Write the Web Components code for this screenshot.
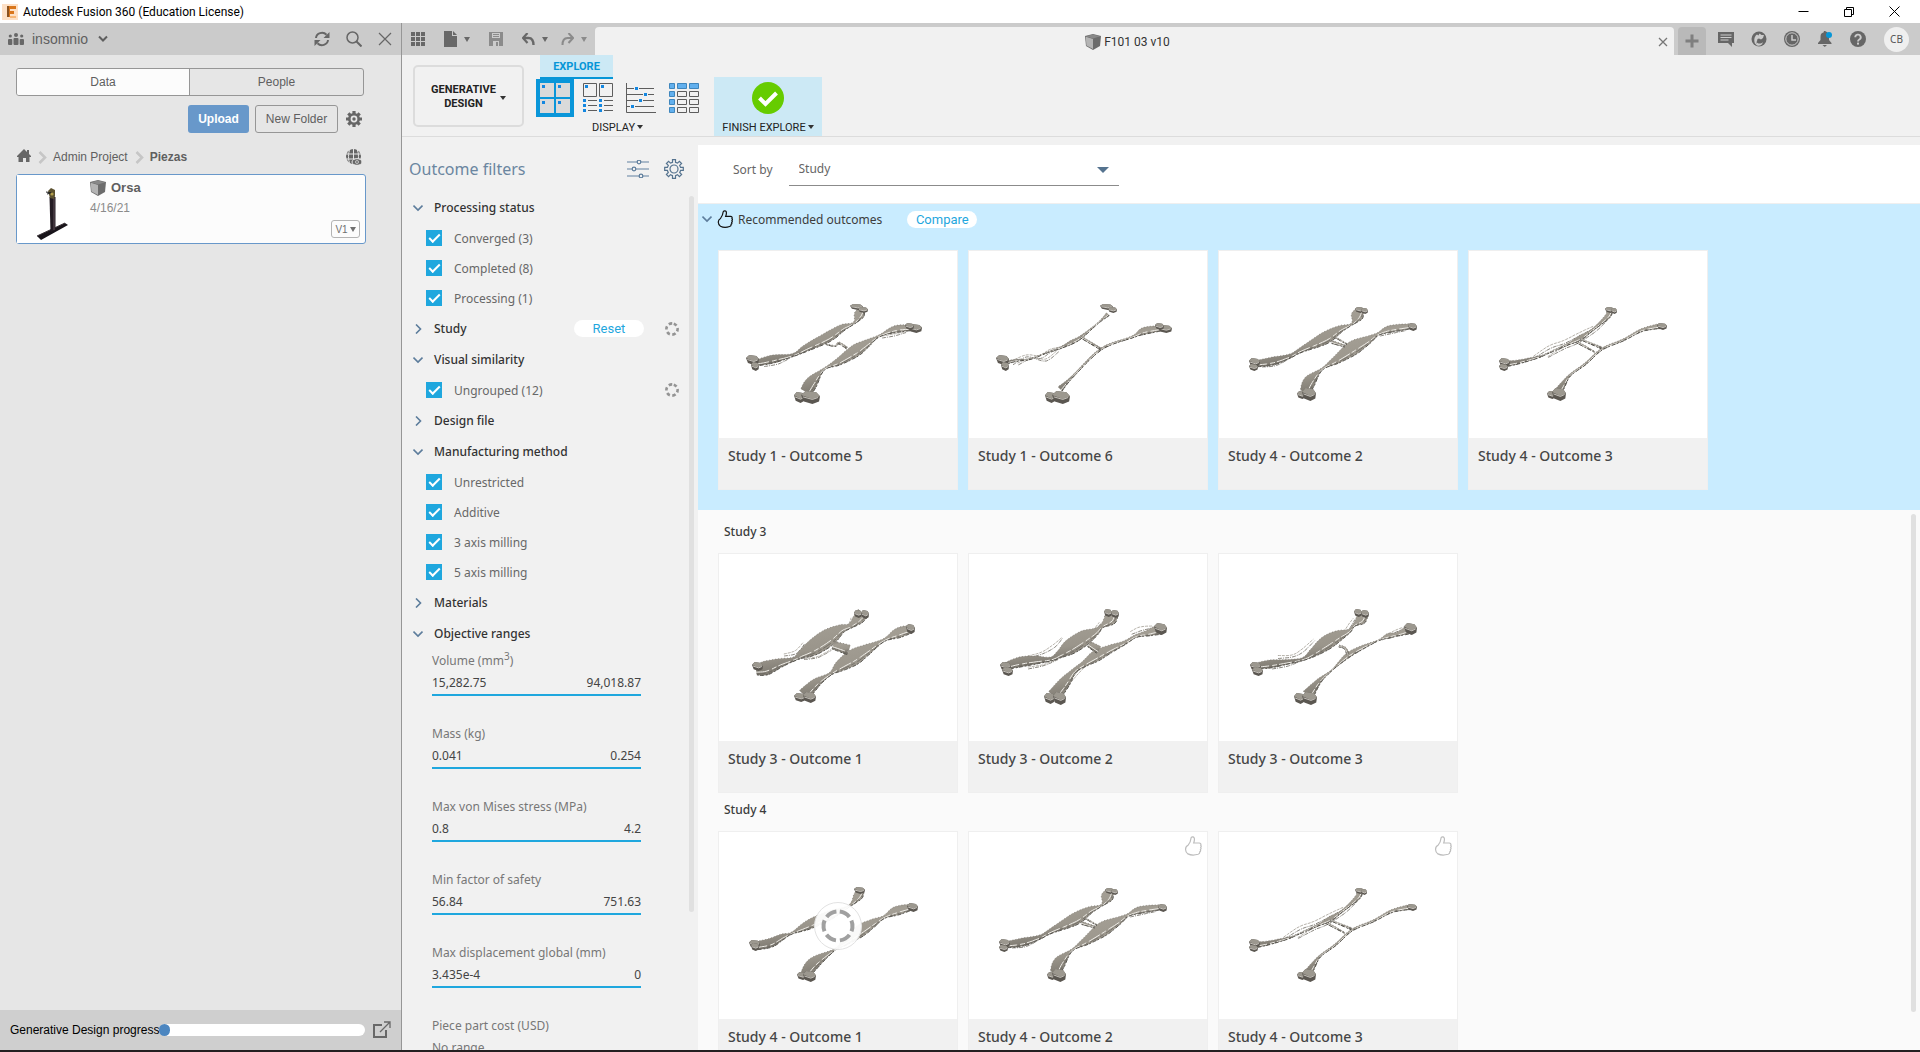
<!DOCTYPE html>
<html lang="en">
<head>
<meta charset="utf-8">
<title>Autodesk Fusion 360 (Education License)</title>
<style>
  html, body { margin: 0; height: 100%; }
  body {
    overflow: hidden;
    --ui: Roboto, "Open Sans", sans-serif;
    --element: "Noto Sans", "Open Sans", sans-serif;
    --arial: "Liberation Sans", Arial, sans-serif;
    --accent: #1fa7de;
    --slate: #55738f;
    font-family: var(--element);
    font-size: 12px;
    color: #3c3c3c;
  }
</style>
</head>
<body>
<fusion-app></fusion-app>

<script>
const ICONS = {
  logo: ['0 0 16 16', '<rect width="16" height="16" fill="#fde0c6"/><path d="M5 2h9v3H8v2h4v3H8v3H5z" fill="#d9761c"/><path d="M5 2h2v11H5z" fill="#8a5220"/><path d="M8 12h6v2H8z" fill="#f6b778"/>'],
  people: ['0 0 16 12', '<g fill="#686868"><circle cx="8" cy="2" r="2"/><circle cx="2.300" cy="3" r="1.600"/><circle cx="13.700" cy="3" r="1.600"/><rect x="5.500" y="5" width="5" height="7" rx="1"/><rect x="0" y="6" width="4.300" height="6" rx="1"/><rect x="11.700" y="6" width="4.300" height="6" rx="1"/></g>'],
  chevDown: ['0 0 10 8', '<path d="M1 1.500l4 4 4-4" fill="none" stroke="currentColor" stroke-width="2"/>'],
  thinDown: ['0 0 10 10', '<path d="M0.500 2.500l4.500 4.500 4.500-4.500" fill="none" stroke="#5d7d9c" stroke-width="1.600"/>'],
  thinRight: ['0 0 10 10', '<path d="M3 0.500l4.500 4.500-4.500 4.500" fill="none" stroke="#5d7d9c" stroke-width="1.600"/>'],
  refresh: ['0 0 16 16', '<g fill="none" stroke="#666" stroke-width="2"><path d="M2 7a6 5.600 0 0 1 10.500-3.200"/><path d="M14 9a6 5.600 0 0 1-10.500 3.200"/></g><path d="M15.500 1v6h-6zM.5 15V9h6z" fill="#666"/>'],
  search: ['0 0 16 16', '<circle cx="6.500" cy="6.500" r="5.500" fill="none" stroke="#666" stroke-width="1.500"/><path d="M10.500 10.500l5 5" stroke="#666" stroke-width="2"/>'],
  close: ['0 0 14 14', '<path d="M1 1l12 12M13 1L1 13" stroke="#666" stroke-width="1.200"/>'],
  tabClose: ['0 0 10 10', '<path d="M1 1l8 8M9 1L1 9" stroke="#777" stroke-width="1.300"/>'],
  gear: ['0 0 16 16', '<path d="M8 0v16M0 8h16M2.300 2.300l11.400 11.400M13.700 2.300L2.300 13.700" stroke="#666" stroke-width="3.200"/><circle cx="8" cy="8" r="6" fill="#666"/><circle cx="8" cy="8" r="3.400" fill="#e6e6e6"/><circle cx="8" cy="8" r="1.700" fill="#666"/>'],
  home: ['0 0 14 13', '<path d="M0 7l5-5 2-2 3 3V1h2v4l2 2v1h-1.500v5H9V9H6v4H1.500V8H0z" fill="#666"/>'],
  crumb: ['0 0 9 13', '<path d="M1.500 1L7 6.500 1.500 12" fill="none" stroke="#c6c6c6" stroke-width="2.600"/>'],
  globe: ['0 0 16 16', '<circle cx="7.500" cy="7.500" r="7.500" fill="#666"/><path d="M0 5h15M0 10h15M7.500 0v15M4 0c-2 4-2 11 0 15M11 0c2 4 2 11 0 15" fill="none" stroke="#e6e6e6"/><ellipse cx="11" cy="13" rx="5" ry="3.300" fill="#666" stroke="#e6e6e6"/><circle cx="11" cy="13" r="1.800" fill="#e6e6e6"/><circle cx="11" cy="13" r="1" fill="#666"/>'],
  cube: ['0 0 16 16', '<path d="M0 2l8-2 8 2-1 10-7 4-7-4z" fill="#6c6c6c"/><path d="M.8 2.800L8 5v10l-6.600-3.500z" fill="#b4b4b4"/><path d="M.8 2.300L8 .6l7.200 1.700L8 4.600z" fill="#888"/>'],
  stand: ['0 0 32 52', '<path d="M0 48l28-13 3 2-27 15z" fill="#18141a"/><path d="M0 48l28-13" stroke="#3b3338"/><path d="M12.500 9h6v33l-5 2z" fill="#241c24"/><path d="M17 10v32" stroke="#4a3d44" stroke-width="1.500"/><path d="M11 3l3-3 4 2v6l-1 3-4-1z" fill="#5c5230"/><path d="M9 4l6 1M10 6l4-1" stroke="#222"/><circle cx="15" cy="6" r="1.600" fill="#b3a04c"/>'],
  triDark: ['0 0 6 4', '<path d="M0 0h6L3 4z" fill="#333"/>'],
  tri: ['0 0 6 5', '<path d="M0 0h6L3 5z" fill="currentColor"/>'],
  grid: ['0 0 14 14', '<path d="M0 0h4v4H0zM5 0h4v4H5zM10 0h4v4h-4zM0 5h4v4H0zM5 5h4v4H5zM10 5h4v4h-4zM0 10h4v4H0zM5 10h4v4H5zM10 10h4v4h-4z" fill="#686868"/>'],
  file: ['0 0 13 16', '<path d="M0 0h8v5h5v11H0z" fill="#686868"/><path d="M9 0l4 4H9z" fill="#686868"/>'],
  save: ['0 0 14 14', '<path d="M0 0h14v14H0z" fill="#8b8b8b"/><path d="M3 1h8v5H3zM4 9h6v5H4z" fill="#ccc"/><path d="M4 2.500h6M4 4.500h6" stroke="#8b8b8b"/><path d="M7 10h2v4H7z" fill="#8b8b8b"/>'],
  undo: ['0 0 13 13', '<path d="M1 5h5.500c3.500 0 5 2.500 5 7" fill="none" stroke="#686868" stroke-width="2.400"/><path d="M5.500 0L1 5l4.500 5" fill="none" stroke="#686868" stroke-width="2.200"/>'],
  redo: ['0 0 13 13', '<path d="M12 5H6.500C3 5 1.500 7.500 1.500 12" fill="none" stroke="#8b8b8b" stroke-width="2"/><path d="M7.500 0L12 5l-4.500 5" fill="none" stroke="#8b8b8b" stroke-width="2"/>'],
  plus: ['0 0 14 14', '<path d="M7 0.500v13M0.500 7h13" stroke="#7f7f7f" stroke-width="3"/>'],
  comment: ['0 0 16 16', '<path d="M0 1h16v11h-2v4l-4-4H0z" fill="#666"/><path d="M2.500 4h11M2.500 6.500h11M2.500 9h8" stroke="#ccc"/>'],
  ext: ['0 0 16 16', '<circle cx="8" cy="8" r="7.500" fill="#666"/><path d="M4.500 13.500C2.500 10 3 5.500 6 3.500l1.500 1L8.500 2.500l2 1.500L13 4l-1 3-2 1.500L8 7.500 6.500 8l-.5 2z" fill="#ccc"/><path d="M5 14c2 1.500 6 1 7-3-2 2-5 2-6.500 0z" fill="#ccc"/>'],
  clock: ['0 0 16 16', '<circle cx="8" cy="8" r="8" fill="#666"/><circle cx="8" cy="8" r="6.200" fill="none" stroke="#ccc"/><path d="M8 4v5h4" fill="none" stroke="#ccc" stroke-width="1.500"/>'],
  bell: ['0 0 16 16', '<path d="M7 0h1c3 1 4 3 4 6v3l2.500 3v1H1v-1l2.500-3V6c0-3 1-4 3-4.500z" fill="#666"/><path d="M5.500 14h4.500l-2.200 2z" fill="#666"/><circle cx="12" cy="4" r="3" fill="#0696d7"/>'],
  help: ['0 0 16 16', '<circle cx="8" cy="8" r="8" fill="#666"/><path d="M5.300 6.300a2.700 2.600 0 1 1 4 2.200C8.400 9 8 9.400 8 10.500" fill="none" stroke="#ccc" stroke-width="1.900"/><rect x="7" y="11.600" width="2" height="2" fill="#ccc"/>'],
  winMin: ['0 0 11 11', '<path d="M0.500 5.500h10" stroke="#000"/>'],
  winMax: ['0 0 10 10', '<path d="M.5 2.500h7v7h-7zM2.500 2V.5h7v7H8" fill="none" stroke="#000"/>'],
  winClose: ['0 0 11 11', '<path d="M.5.500l10 10M10.500.500l-10 10" stroke="#000"/>'],
  viewThumb: ['0 0 38 38', '<path d="M0 0h38v38H0z" fill="#0a96d9"/><path d="M4 4h14v14H4zM20 4h14v14H20zM4 20h14v14H4zM20 20h14v14H20z" fill="#dadada"/><path d="M6 6h3v3H6zM22 6h3v3h-3zM6 22h3v3H6zM22 22h3v3h-3z" fill="#1487e0"/>'],
  viewProps: ['0 0 38 38', '<path d="M4.500 4.500h13v13h-13zM20.500 4.500h13v13h-13z" fill="none" stroke="#5d5d5d"/><path d="M6 6h3v3H6zM22 6h3v3h-3zM4 20h3v3H4zM4 25h3v3H4zM4 30h3v3H4zM20 20h3v3h-3zM20 25h3v3h-3zM20 30h3v3h-3z" fill="#1487e0"/><path d="M9 21.500h9M9 26.500h9M9 31.500h9M25 21.500h9M25 26.500h9M25 31.500h9" stroke="#5d5d5d"/>'],
  viewScatter: ['0 0 38 38', '<path d="M4.500 4v29.500H34M5 9.500h27M5 15.500h27M5 21.500h27M5 27.500h27" fill="none" stroke="#5d5d5d"/><path d="M12 7h5v5h-5zM21 13h5v5h-5zM16 19h5v5h-5zM8 25h5v5H8z" fill="#f1f1f1"/><path d="M13 8h3v3h-3zM22 14h3v3h-3zM17 20h3v3h-3zM9 26h3v3H9z" fill="#1487e0"/>'],
  viewTable: ['0 0 38 38', '<path d="M4.500 4.500h5v5h-5zM12.500 4.500h9v5h-9zM24.500 4.500h9v5h-9zM4.500 12.500h5v5h-5zM4.500 20.500h5v5h-5zM4.500 28.500h5v5h-5z" fill="#62b0ee" stroke="#3f86bd"/><path d="M12.500 12.500h9v5h-9zM24.500 12.500h9v5h-9zM12.500 20.500h9v5h-9zM24.500 20.500h9v5h-9zM12.500 28.500h9v5h-9zM24.500 28.500h9v5h-9z" fill="none" stroke="#5d5d5d"/>'],
  finish: ['0 0 32 32', '<circle cx="16" cy="16" r="16" fill="#66cc00"/><path d="M7.500 16l6 6L24.500 11" fill="none" stroke="#fff" stroke-width="4"/>'],
  sliders: ['0 0 22 18', '<path d="M0 2h22M0 9h22M0 16h22" stroke="#91a7bc" stroke-width="1.500"/><g fill="#f1f1f1" stroke="#5d7d9c" stroke-width="1.200"><circle cx="12" cy="2" r="1.800"/><circle cx="7" cy="9" r="1.800"/><circle cx="14" cy="16" r="1.800"/></g>'],
  gearLine: ['0 0 20 20', '<path d="M8.500 .7h3v2.600l2 .8 1.900-1.800 2.200 2.200-1.900 1.900.9 2h2.700v3h-2.700l-.9 2.100 1.900 1.900-2.200 2.200-1.900-1.900-2 .9v2.700h-3v-2.700l-2-.9-1.900 1.900-2.200-2.200 1.900-1.900-.9-2.100H.7v-3h2.700l.9-2-1.900-1.900 2.200-2.200 1.900 1.800 2-.8z" fill="none" stroke="#55738f" stroke-width="1.200"/><circle cx="10" cy="10" r="4" fill="none" stroke="#55738f" stroke-width="1.200"/>'],
  busy: ['0 0 14 14', '<circle cx="7" cy="7" r="5.600" fill="none" stroke="#949494" stroke-width="2.600" stroke-dasharray="3.400 2.460" transform="rotate(-72 7 7)"/>'],
  thumb: ['0 0 16 18', '<path d="M3.500 8.500C5 6.500 6 4 6.200 1.800 6.400.6 8.600.4 9.200 1.600c.4 1.400.1 3.200-.5 4.700h4.800c1.500 0 1.900 1.300 1.400 2 .6.600.6 1.500 0 2.100.5.700.4 1.500-.2 2 .4.900.1 1.500-.6 1.900.2 1.200-.4 1.900-1.500 2.200-2.600.9-6.600 1-9.100-.300C.8 14.600.3 10 3.500 8.500z" fill="none" stroke="currentColor" stroke-width="1.200"/>'],
  thumbLarge: ['0 0 18 20', '<path d="M4 9.300C5.800 7 6.900 4.500 7 2.200 7.200.7 9.600.5 10.200 1.900c.5 1.600.1 3.500-.5 5.100h5.400c1.600 0 2.100 1.400 1.600 2.200.6.700.6 1.600 0 2.300.5.800.4 1.700-.3 2.200.4 1 .2 1.700-.6 2.100.2 1.300-.5 2.100-1.700 2.500-3 .9-7.400 1-10.200-.4C1 16.200.5 11 4 9.300z" fill="none" stroke="currentColor" stroke-width="1.200"/>'],
  popout: ['0 0 18 18', '<path d="M9 4H1v12h12V9" fill="none" stroke="#686868" stroke-width="2"/><path d="M7 11l9.500-9.500M11 1h6v6" fill="none" stroke="#686868" stroke-width="1.300"/>'],
};

class UiIcon extends HTMLElement {
  connectedCallback() {
    const [box, body] = ICONS[this.getAttribute('name')];
    const [, , w, h] = box.split(' ');
    this.attachShadow({ mode: 'open' }).innerHTML =
      `<style>:host{display:inline-flex;flex:none}svg{display:block}</style>
       <svg width="${w}" height="${h}" viewBox="${box}" aria-hidden="true">${body}</svg>`;
  }
}
customElements.define('ui-icon', UiIcon);

/* Registers an element whose shadow root is filled from a markup string. */
function define(tag, markup) {
  customElements.define(tag, class extends HTMLElement {
    connectedCallback() {
      if (this.shadowRoot) return;
      const t = document.createElement('template');
      t.innerHTML = typeof markup === 'function' ? markup(this) : markup;
      this.attachShadow({ mode: 'open' }).append(t.content.cloneNode(true));
    }
  });
}
const BASE = `*{box-sizing:border-box}
  button{font:inherit;color:inherit;background:none;border:0;padding:0;margin:0;display:inline-flex;align-items:center;justify-content:center}`;

define('title-bar', `<style>${BASE}
  :host{display:flex;align-items:center;height:23px;background:#fff;color:#000;font:12px var(--ui);padding:0 20px 0 2px;gap:5px;flex:none}
  .win{margin-left:auto;display:flex;gap:35px}
  </style>
  <ui-icon name="logo"></ui-icon><span>Autodesk Fusion 360 (Education License)</span>
  <div class="win"><button aria-label="Minimize"><ui-icon name="winMin"></ui-icon></button><button aria-label="Restore"><ui-icon name="winMax"></ui-icon></button><button aria-label="Close"><ui-icon name="winClose"></ui-icon></button></div>`);

define('data-panel', `<style>${BASE}
  :host{display:flex;flex-direction:column;width:402px;flex:none;background:#e6e6e6;border-right:1px solid #969696;font:12px var(--arial);color:#5f5f5f}
  header{display:flex;align-items:center;height:32px;background:#cbcbcb;padding:0 9px 0 8px;gap:16px;flex:none}
  .team{font-size:14px;gap:8px}
  .team ui-icon:last-child{margin-left:2px}
  header .team{margin-right:auto}
  .body{flex:1;padding:13px 35px 0 16px;min-height:0}
  .seg{display:grid;grid-template-columns:1fr 1fr;height:28px;border:1px solid #969696;border-radius:3px;overflow:hidden;margin-right:2px}
  .seg button:first-child{background:#fcfcfc;border-right:1px solid #969696}
  .actions{display:flex;justify-content:flex-end;align-items:center;gap:6px;margin-top:9px;padding-right:4px}
  .actions button{height:28px;border-radius:3px}
  .up{background:#6898ca;color:#fff;font-weight:700;width:61px}
  .new{border:1px solid #969696;width:83px}
  .actions .set{padding-left:2px}
  nav{display:flex;align-items:center;height:41px;padding:7px 4px 0 1px}
  nav a{color:inherit;text-decoration:none}
  nav ui-icon[name=crumb]{margin:0 6px 0 7px}
  nav .last{font-weight:700;margin-right:auto}
  article{display:grid;grid-template-columns:73px 1fr auto;height:70px;background:#fcfcfc;border:1px solid #6898ca;border-radius:3px}
  article .pic{background:#fff;padding:13px 0 0 20px}
  h3{font-size:13px;margin:5px 0;line-height:16px;display:flex;gap:5px;align-items:center}
  time{display:block;color:#8b8b8b;line-height:15px}
  .ver{align-self:end;border:1px solid #b4b4b4;border-radius:3px;width:29px;height:18px;font-size:10px;margin:0 5px 5px 0;gap:2px;color:#707070}
  footer{display:flex;align-items:center;height:40px;background:#cfcfcf;color:#000;padding:0 10px;flex:none}
  progress{appearance:none;flex:1;height:12px;min-width:0;margin-right:8px}
  progress::-webkit-progress-bar{background:#fff;border-radius:6px}
  progress::-webkit-progress-value{background:#4c86c0;border-radius:6px}
  </style>
  <header><button class="team"><ui-icon name="people"></ui-icon>insomnio<ui-icon name="chevDown"></ui-icon></button>
    <button aria-label="Refresh"><ui-icon name="refresh"></ui-icon></button><button aria-label="Search"><ui-icon name="search"></ui-icon></button><button aria-label="Close panel"><ui-icon name="close"></ui-icon></button></header>
  <div class="body">
    <div class="seg"><button>Data</button><button>People</button></div>
    <div class="actions"><button class="up">Upload</button><button class="new">New Folder</button><button class="set" aria-label="Settings"><ui-icon name="gear"></ui-icon></button></div>
    <nav><a href="#" aria-label="Home"><ui-icon name="home"></ui-icon></a><ui-icon name="crumb"></ui-icon><a href="#">Admin Project</a><ui-icon name="crumb"></ui-icon><a href="#" class="last">Piezas</a><button aria-label="Open on the web"><ui-icon name="globe"></ui-icon></button></nav>
    <article><div class="pic"><ui-icon name="stand"></ui-icon></div><div><h3><ui-icon name="cube"></ui-icon>Orsa</h3><time>4/16/21</time></div><button class="ver">V1<ui-icon name="tri"></ui-icon></button></article>
  </div>
  <footer><label for="p">Generative Design progress</label><progress id="p" max="100" value="5"></progress><button aria-label="Open job status"><ui-icon name="popout"></ui-icon></button></footer>`);

define('document-bar', `<style>${BASE}
  :host{display:flex;align-items:center;height:32px;background:#cbcbcb;padding-right:11px;flex:none;color:#686868;font:12px var(--ui)}
  .tools{display:flex;align-items:center;width:193px;padding-left:9px;flex:none}
  .tools button{gap:7px;margin-right:19px}
  .tools .last{color:#8b8b8b;margin:0}
  .tools .u{margin-right:13px}
  .tab{flex:1;align-self:flex-end;height:28px;background:#f1f1f1;border-radius:4px 4px 0 0;display:flex;align-items:center;padding:1px 6px 0 2px;color:#333}
  .tab button:first-child{flex:1;gap:3px}
  .add{align-self:flex-end;width:28px;height:28px;background:#b9b9b9;border-radius:4px 4px 0 0;margin:0 12px 0 4px}
  .right{display:flex;gap:17px;align-items:center}
  .av{width:25px;height:25px;border-radius:50%;background:#efefef;margin-left:1px;font:10px var(--element);color:#555}
  </style>
  <div class="tools"><button aria-label="Data panel"><ui-icon name="grid"></ui-icon></button><button aria-label="File"><ui-icon name="file"></ui-icon><ui-icon name="tri"></ui-icon></button><button aria-label="Save"><ui-icon name="save"></ui-icon></button><button class="u" aria-label="Undo"><ui-icon name="undo"></ui-icon><ui-icon name="tri"></ui-icon></button><button class="last" aria-label="Redo"><ui-icon name="redo"></ui-icon><ui-icon name="tri"></ui-icon></button></div>
  <div class="tab"><button><ui-icon name="cube"></ui-icon>F101 03 v10</button><button aria-label="Close tab"><ui-icon name="tabClose"></ui-icon></button></div>
  <button class="add" aria-label="New tab"><ui-icon name="plus"></ui-icon></button>
  <div class="right"><button aria-label="Comments"><ui-icon name="comment"></ui-icon></button><button aria-label="Extensions"><ui-icon name="ext"></ui-icon></button><button aria-label="Job status"><ui-icon name="clock"></ui-icon></button><button aria-label="Notifications"><ui-icon name="bell"></ui-icon></button><button aria-label="Help"><ui-icon name="help"></ui-icon></button><button class="av">CB</button></div>`);

define('tool-ribbon', `<style>${BASE}
  :host{display:flex;height:82px;padding-left:11px;background:#f1f1f1;border-bottom:1px solid #dcdcdc;font:11px var(--ui);color:#222;flex:none}
  .work{width:111px;height:62px;margin:10px 12px 0 0;border:2px solid #dcdcdc;border-radius:5px;gap:4px;font-weight:700;line-height:14px;padding-top:1px}
  .work ui-icon{padding-top:2px}
  .group{display:flex;flex-direction:column;align-items:center}
  .tab{align-self:flex-start;margin-left:4px;width:73px;height:24px;background:#cce9f5;color:#0696d7;font-weight:700;border-bottom:2px solid #0696d7}
  .views{display:flex;gap:5px}
  .cap{display:flex;align-items:center;height:19px;gap:2px;padding-top:1px}
  .group .cap{margin-right:4px}
  .finish{flex-direction:column;justify-content:space-between;width:108px;height:59px;margin:22px 0 0 11px;background:#cce9f5;padding-top:5px}
  </style>
  <button class="work"><span>GENERATIVE<br>DESIGN</span><ui-icon name="triDark"></ui-icon></button>
  <div class="group"><button class="tab">EXPLORE</button>
    <div class="views"><button aria-label="Thumbnail view"><ui-icon name="viewThumb"></ui-icon></button><button aria-label="Properties view"><ui-icon name="viewProps"></ui-icon></button><button aria-label="Scatter plot view"><ui-icon name="viewScatter"></ui-icon></button><button aria-label="Table view"><ui-icon name="viewTable"></ui-icon></button></div>
    <button class="cap">DISPLAY<ui-icon name="triDark"></ui-icon></button></div>
  <button class="finish"><ui-icon name="finish"></ui-icon><span class="cap">FINISH EXPLORE<ui-icon name="triDark"></ui-icon></span></button>`);

define('filter-group', el => `<style>${BASE}
  :host{display:block}
  .head{display:flex;align-items:center;height:31px;padding:0 10px 0 11px}
  .t{gap:11px;font-weight:500;color:#333;margin-right:auto}
  .reset{width:70px;height:17px;border-radius:9px;background:#fff;color:var(--accent);font:13px var(--ui);margin-right:21px}
  </style>
  <div class="head"><button class="t" aria-expanded="${el.hasAttribute('open')}"><ui-icon name="${el.hasAttribute('open') ? 'thinDown' : 'thinRight'}"></ui-icon>${el.getAttribute('label')}</button>
  ${el.hasAttribute('reset') ? '<button class="reset">Reset</button><ui-icon name="busy"></ui-icon>' : ''}</div><slot></slot>`);

define('filter-check', el => `<style>${BASE}
  :host{display:flex;align-items:center;height:30px;padding:0 10px 0 24px;color:#686868}
  input{appearance:none;width:16px;height:16px;margin:0 12px 0 0;background:var(--accent);display:grid;place-content:center}
  input:checked::before{content:"";width:9px;height:4px;border:solid #fff;border-width:0 0 2px 2px;transform:translateY(-1px) rotate(-45deg)}
  label{margin-right:auto}
  </style><input type="checkbox" id="c" checked><label for="c">${el.getAttribute('label')}</label>
  ${el.hasAttribute('busy') ? '<ui-icon name="busy"></ui-icon>' : ''}`);

define('range-field', el => `<style>${BASE}
  :host{display:block;height:73px;margin:0 48px 0 30px}
  .l{line-height:24px;height:24px;color:#777}
  .v{display:flex;justify-content:space-between;height:23px;line-height:20px;border-bottom:2px solid var(--accent);color:#444}
  .v.none{border:0;color:#777}
  ::slotted(sup){font-size:10px;line-height:0}
  </style><div class="l"><slot></slot></div>
  ${el.hasAttribute('min') ? `<div class="v"><span>${el.getAttribute('min')}</span><span>${el.getAttribute('max')}</span></div>` : '<div class="v none">No range</div>'}`);

define('outcome-filters', `<style>${BASE}
  :host{display:flex;width:296px;flex:none;overflow:hidden;flex-direction:column;background:#f1f1f1}
  header{display:flex;align-items:center;height:47px;padding:0 14px 0 7px;gap:15px;flex:none}
  h2{font-size:16px;font-weight:400;color:#6b86a0;margin:0 auto 0 0}
  .scroll{flex:1;display:flex;min-height:0;overflow:hidden}
  .list{flex:1}
  .bar{width:5px;margin:4px 4px 138px 0;border-radius:3px;background:#e0e0e0}
  </style>
  <header><h2>Outcome filters</h2><button aria-label="Filter options"><ui-icon name="sliders"></ui-icon></button><button aria-label="Filter settings"><ui-icon name="gearLine"></ui-icon></button></header>
  <div class="scroll"><div class="list">
  <filter-group label="Processing status" open><filter-check label="Converged (3)"></filter-check><filter-check label="Completed (8)"></filter-check><filter-check label="Processing (1)"></filter-check></filter-group>
  <filter-group label="Study" reset></filter-group>
  <filter-group label="Visual similarity" open><filter-check label="Ungrouped (12)" busy></filter-check></filter-group>
  <filter-group label="Design file"></filter-group>
  <filter-group label="Manufacturing method" open><filter-check label="Unrestricted"></filter-check><filter-check label="Additive"></filter-check><filter-check label="3 axis milling"></filter-check><filter-check label="5 axis milling"></filter-check></filter-group>
  <filter-group label="Materials"></filter-group>
  <filter-group label="Objective ranges" open>
    <range-field min="15,282.75" max="94,018.87">Volume (mm<sup>3</sup>)</range-field>
    <range-field min="0.041" max="0.254">Mass (kg)</range-field>
    <range-field min="0.8" max="4.2">Max von Mises stress (MPa)</range-field>
    <range-field min="56.84" max="751.63">Min factor of safety</range-field>
    <range-field min="3.435e-4" max="0">Max displacement global (mm)</range-field>
    <range-field>Piece part cost (USD)</range-field>
  </filter-group></div><div class="bar"></div></div>`);

/* Generated parts. Each limb is a centre line of [x, y, thickness] stations;
   each pad is a mounting boss at [x, y, width, height]. */
const MODELS = {
  s1o5: { pads: [[28,105,13,10],[33,112,8,9],[132,54,13,6],[140,57,10,6],[190,74,14,9],[187,73,9,7],[76,142,11,11],[83,141,19,13]],
    lattice: [[[46,115,3],[60,113,2],[72,107,2]], [[164,87,2],[176,85,2],[188,82,1]]],
    limbs: [[[38,113,6],[55,109,8],[75,105,3],[88,98,7],[110,87,10],[124,78,7],[136,73,2],[141,65,10],[144,60,6]],
            [[195,78,5],[178,79,7],[161,86,2],[148,94,8],[137,101,12],[120,112,7],[106,119,2],[94,132,12],[88,142,12]],
            [[108,94,1],[117,96,1],[121,93,2],[129,98,2]]] },
  s1o6: { pads: [[28,105,13,10],[33,112,8,9],[132,54,13,6],[140,57,9,6],[190,75,14,8],[187,73,9,7],[77,142,11,11],[84,141,18,13]],
    lattice: [[[44,113,4],[58,106,2],[72,107,3],[82,101,3],[92,98,2]], [[50,114,2],[64,108,1],[78,110,2],[90,101,2]]],
    limbs: [[[40,112,3],[50,110,2],[62,109,1],[80,102,1],[94,97,2],[104,92,4],[113,87,3],[130,73,1],[140,64,4]],
            [[195,78,5],[176,81,7],[164,87,2],[133,99,2],[104,127,2],[92,139,6]],
            [[113,87,2],[133,99,2]]] },
  s4o2: { pads: [[31,108,11,9],[31,114,9,7],[137,57,9,6],[143,58,7,6],[190,73,9,8],[79,141,9,8],[84,138,14,13]],
    lattice: [[[44,116,2],[58,114,3],[72,107,2]], [[162,85,2],[176,82,2],[188,80,1]]],
    limbs: [[[36,114,6],[55,111,8],[72,106,4],[83,100,5],[107,88,12],[122,79,7],[134,74,2],[139,66,12],[143,59,6]],
            [[194,76,5],[172,79,7],[160,84,3],[150,90,8],[135,98,14],[118,110,8],[104,119,2],[92,131,12],[87,142,10]],
            [[117,87,1],[129,94,1]], [[114,92,3],[127,96,2]]] },
  s4o3: { pads: [[31,108,11,9],[31,114,9,7],[137,57,9,6],[143,58,6,6],[189,73,10,7],[79,141,9,8],[84,138,14,13]],
    lattice: [[[66,107,2],[82,97,3],[96,92,3],[112,84,3],[126,77,2]], [[80,107,1],[96,98,2],[110,92,2],[128,80,2],[139,69,2]]],
    limbs: [[[36,114,6],[50,112,4],[70,107,2],[78,104,1],[100,94,2],[112,88,5],[124,80,2],[139,67,5],[142,60,6]],
            [[192,76,5],[174,80,3],[155,90,2],[134,99,2],[117,114,2],[102,125,2],[94,136,6],[90,142,8]],
            [[112,89,1],[134,98,2]], [[109,92,2],[127,102,1]]] },
  s3o1: { pads: [[34,109,11,9],[136,57,8,8],[143,57,8,9],[188,71,9,10],[76,140,12,9],[85,139,13,11]],
    lattice: [[[66,102,2],[78,99,3],[86,90,2]], [[125,76,2],[132,72,3],[134,65,2]], [[86,106,1],[100,104,1],[113,97,1]]],
    limbs: [[[38,117,10],[48,115,14],[62,110,9],[76,106,4],[84,101,9],[96,94,16],[111,84,17],[123,76,9],[132,73,5],[140,66,11],[145,60,12]],
            [[193,76,8],[180,80,10],[166,87,3],[150,96,10],[136,104,16],[122,113,11],[112,121,3],[98,130,9],[86,142,13]],
            [[115,92,8],[131,97,10]]] },
  s3o2: { pads: [[32,109,11,9],[34,114,11,9],[136,56,8,8],[143,57,8,8],[186,70,13,12],[76,140,11,11],[85,139,13,13]],
    lattice: [[[60,104,2],[74,100,2],[86,93,3],[94,85,1]], [[118,111,2],[106,124,2],[98,134,2]], [[60,115,2],[76,112,1],[90,106,1]], [[163,80,3],[172,76,4],[184,74,2]], [[126,78,2],[132,70,2]]],
    limbs: [[[38,113,7],[52,109,10],[68,107,8],[83,106,4],[92,101,8],[102,94,15],[116,85,15],[127,79,8],[134,73,4],[142,66,13],[144,60,10]],
            [[192,76,11],[180,80,6],[168,83,3],[156,90,4],[142,96,8],[128,103,11],[116,111,6],[106,118,5],[97,129,11],[86,143,14]],
            [[121,91,6],[131,97,8]]] },
  s3o3: { pads: [[32,109,11,9],[34,114,11,9],[136,56,8,8],[143,57,8,8],[186,70,13,12],[76,140,11,11],[84,139,15,13]],
    lattice: [[[60,104,3],[74,103,2],[84,98,3],[96,87,2]], [[54,115,2],[70,112,2],[84,107,1]], [[164,86,2],[176,79,2],[186,75,2]], [[127,80,3],[132,72,3],[136,66,2]]],
    limbs: [[[38,113,6],[52,111,8],[68,109,5],[85,106,3],[96,99,9],[108,90,14],[120,83,11],[131,78,4],[136,72,3],[143,66,11],[144,60,9]],
            [[192,76,10],[180,81,4],[170,83,5],[161,87,1],[143,95,4],[129,103,5],[114,117,1],[101,128,5],[90,142,12]],
            [[121,93,2],[127,95,2],[130,101,3]]] },
  s4o1: { pads: [[31,109,11,8],[33,112,8,8],[136,56,11,7],[189,72,11,9],[79,141,10,8],[85,140,13,11]],
    limbs: [[[36,115,8],[52,112,9],[64,106,6],[74,102,2],[90,94,9],[112,84,9],[131,75,2],[140,65,9],[143,60,6]],
            [[194,76,6],[178,80,9],[166,86,3],[155,92,8],[142,100,12],[126,112,6],[116,119,2],[96,132,12],[87,144,10]]] },
};

/* Catmull-Rom samples between stations, so limbs swell and taper smoothly. */
function sample(st) {
  const out = [];
  for (let i = 0; i < st.length - 1; i++) {
    const p = [st[i - 1] || st[i], st[i], st[i + 1], st[i + 2] || st[i + 1]];
    for (let k = 0; k < 6; k++) {
      const t = k / 6;
      out.push([0, 1, 2].map(j => {
        const [a, b, c, d] = p.map(q => q[j]);
        return 0.5 * (2 * b + (c - a) * t + (2 * a - 5 * b + 4 * c - d) * t * t + (3 * b - a - 3 * c + d) * t * t * t);
      }));
    }
  }
  out.push(st[st.length - 1]);
  return out;
}
function limb(st, thin) {
  const s = sample(st);
  const side = (sign, f) => s.map((p, i) => {
    const a = s[Math.max(0, i - 1)], b = s[Math.min(s.length - 1, i + 1)];
    const dx = b[0] - a[0], dy = b[1] - a[1], n = Math.hypot(dx, dy) || 1;
    const w = Math.max(1, p[2]) / 2 * f * sign;
    return [(p[0] - dy / n * w).toFixed(1), (p[1] + dx / n * w).toFixed(1)];
  });
  const up = side(1, 1), down = side(-1, 1);
  const line = a => 'M' + a.map(p => p.join(' ')).join('L');
  if (thin) return `<path d="${line(up)}" fill="none" stroke="#7b776f" stroke-width=".9" stroke-dasharray="4 1 1 1"/><path d="${line(down)}" fill="none" stroke="#aaa69d" stroke-width=".9" stroke-dasharray="3 1"/>`;
  const flip = s[0][0] > s[s.length - 1][0];
  const low = flip ? down : up, high = flip ? up : down, k = flip ? -1 : 1;
  const body = line(up) + 'L' + [...down].reverse().map(p => p.join(' ')).join('L') + 'Z';
  return `<path d="${body}" fill="url(#m)"/>
    <path d="${line(side(k, 0.72))}" fill="none" stroke="#6b675f" stroke-width=".8" stroke-dasharray="9 3 4 2"/>
    <path d="${line(side(k, 0.45))}" fill="none" stroke="#efede8" stroke-dasharray="13 3 5 2"/>
    <path d="${line(low)}" fill="none" stroke="#4c4944" stroke-width=".9" stroke-dasharray="2 1 4 2"/>
    <path d="${line(high)}" fill="none" stroke="#77736b" stroke-width=".7" stroke-dasharray="1 2"/>`;
}
function pad([x, y, w, h]) {
  return `<path d="M${x} ${y + h * .3}L${x + w * .25} ${y}L${x + w * .8} ${y + h * .1}L${x + w} ${y + h * .4}L${x + w * .95} ${y + h * .8}L${x + w * .6} ${y + h}L${x + w * .15} ${y + h * .8}Z" fill="#5b5751"/>
    <path d="M${x} ${y + h * .3}L${x + w * .25} ${y}L${x + w * .8} ${y + h * .1}L${x + w} ${y + h * .4}L${x + w * .6} ${y + h * .62}Z" fill="#9c988f"/>
    <path d="M${x + w * .1} ${y + h * .45}L${x + w * .6} ${y + h * .65}L${x + w * .9} ${y + h * .5}" fill="none" stroke="#dedbd4" stroke-width=".8"/>`;
}

define('outcome-card', el => {
  const m = MODELS[el.getAttribute('model')];
  return `<style>${BASE}
  :host{display:flex;flex-direction:column;position:relative;width:240px;height:240px;background:#fff;border:1px solid #efefef;flex:none}
  .view{height:187px}
  .view svg{display:block}
  .name{flex:1;background:#f1f1f1;margin:0;padding:8px 9px;font-size:14px;line-height:20px;font-weight:500;color:#464646}
  .like{position:absolute;right:5px;top:4px;color:#bdbdbd}
  .spin{position:absolute;left:95px;top:70px}
  </style>
  <div class="view"><svg width="238" height="187" viewBox="1 1 238 187" role="img" aria-label="${el.getAttribute('name')} shape">
    <defs><linearGradient id="m" x1="0" y1="0" x2="0.300" y2="1"><stop offset="0" stop-color="#827e76"/><stop offset=".3" stop-color="#a39e94"/><stop offset=".7" stop-color="#9a958b"/><stop offset="1" stop-color="#76726a"/></linearGradient></defs>
    ${(m.lattice || []).map(s => limb(s, true)).join('')}${m.limbs.map(s => limb(s)).join('')}${m.pads.map(pad).join('')}</svg></div>
  <h4 class="name">${el.getAttribute('name')}</h4>
  ${el.hasAttribute('liked') ? '<button class="like" aria-label="Recommended"><ui-icon name="thumbLarge"></ui-icon></button>' : ''}
  ${el.hasAttribute('busy') ? '<svg class="spin" width="48" height="48" viewBox="0 0 48 48"><circle cx="24" cy="24" r="23.500" fill="#fff" fill-opacity=".94" stroke="#e2e2e2"/><circle cx="24" cy="24" r="14.500" fill="none" stroke="#a0a0a0" stroke-width="4" stroke-dasharray="11.200 3.980" transform="rotate(-83 24 24)"/></svg>' : ''}`;
});

define('sort-bar', `<style>${BASE}
  :host{display:flex;align-items:center;height:59px;background:#fff;border-bottom:1px solid #efefef;padding:0 0 10px 35px;gap:16px;color:#666;flex:none}
  .box{display:flex;align-items:center;width:330px;height:34px;border-bottom:1px solid #8b8b8b;position:relative}
  select{appearance:none;border:0;background:none;font:inherit;color:inherit;flex:1;padding:0 10px;height:100%}
  .arrow{position:absolute;right:10px;top:15px;border:6px solid transparent;border-top-color:var(--slate);border-bottom:0;pointer-events:none}
  </style><label for="s">Sort by</label><div class="box"><select id="s"><option>Study</option></select><span class="arrow"></span></div>`);

define('recommended-section', `<style>${BASE}
  :host{display:block;background:#c9ecff;padding:0 20px 20px;flex:none}
  header{display:flex;align-items:center;height:30px;margin:0 0 16px -16px;color:#3c3c3c}
  .t{gap:5px}
  .t ui-icon[name=thumb]{color:#111}
  .cmp{width:70px;height:17px;border-radius:9px;background:#fff;color:var(--accent);font:13px var(--ui);margin-left:25px}
  .row{display:flex;gap:10px}
  </style><header><button class="t"><ui-icon name="thinDown"></ui-icon><ui-icon name="thumb"></ui-icon>Recommended outcomes</button><button class="cmp">Compare</button></header>
  <div class="row"><slot></slot></div>`);

define('study-section', el => `<style>${BASE}
  :host{display:block;padding:0 20px;flex:none}
  h3{margin:0;padding:8px 0 0 6px;font-size:12px;font-weight:500;line-height:18px;height:38px}
  .row{display:flex;gap:10px}
  </style><h3>${el.getAttribute('label')}</h3><div class="row"><slot></slot></div>`);

define('outcome-browser', `<style>${BASE}
  :host{display:flex;flex-direction:column;flex:1;min-width:0;background:#fafafa}
  .results{flex:1;min-height:0;overflow:hidden;display:flex}
  .list{flex:1;padding-top:5px}
  .bar{width:5px;margin:4px 4px 38px 0;border-radius:3px;background:#e0e0e0}
  </style><sort-bar></sort-bar>
  <recommended-section>
    <outcome-card model="s1o5" name="Study 1 - Outcome 5"></outcome-card><outcome-card model="s1o6" name="Study 1 - Outcome 6"></outcome-card><outcome-card model="s4o2" name="Study 4 - Outcome 2"></outcome-card><outcome-card model="s4o3" name="Study 4 - Outcome 3"></outcome-card>
  </recommended-section>
  <div class="results"><div class="list">
    <study-section label="Study 3"><outcome-card model="s3o1" name="Study 3 - Outcome 1"></outcome-card><outcome-card model="s3o2" name="Study 3 - Outcome 2"></outcome-card><outcome-card model="s3o3" name="Study 3 - Outcome 3"></outcome-card></study-section>
    <study-section label="Study 4"><outcome-card model="s4o1" name="Study 4 - Outcome 1" busy></outcome-card><outcome-card model="s4o2" name="Study 4 - Outcome 2" liked></outcome-card><outcome-card model="s4o3" name="Study 4 - Outcome 3" liked></outcome-card></study-section>
  </div><div class="bar"></div></div>`);

define('fusion-app', `<style>${BASE}
  :host{display:flex;flex-direction:column;height:100vh;border-bottom:2px solid #241f20;box-sizing:border-box;overflow:hidden;background:#f1f1f1}
  .main{flex:1;display:flex;min-height:0}
  .work{flex:1;display:flex;flex-direction:column;min-width:0}
  .explore{flex:1;display:flex;min-height:0;padding-top:8px}
  </style><title-bar></title-bar>
  <div class="main"><data-panel></data-panel>
    <div class="work"><document-bar></document-bar><tool-ribbon></tool-ribbon>
      <div class="explore"><outcome-filters></outcome-filters><outcome-browser></outcome-browser></div></div></div>`);
</script>
</body>
</html>
